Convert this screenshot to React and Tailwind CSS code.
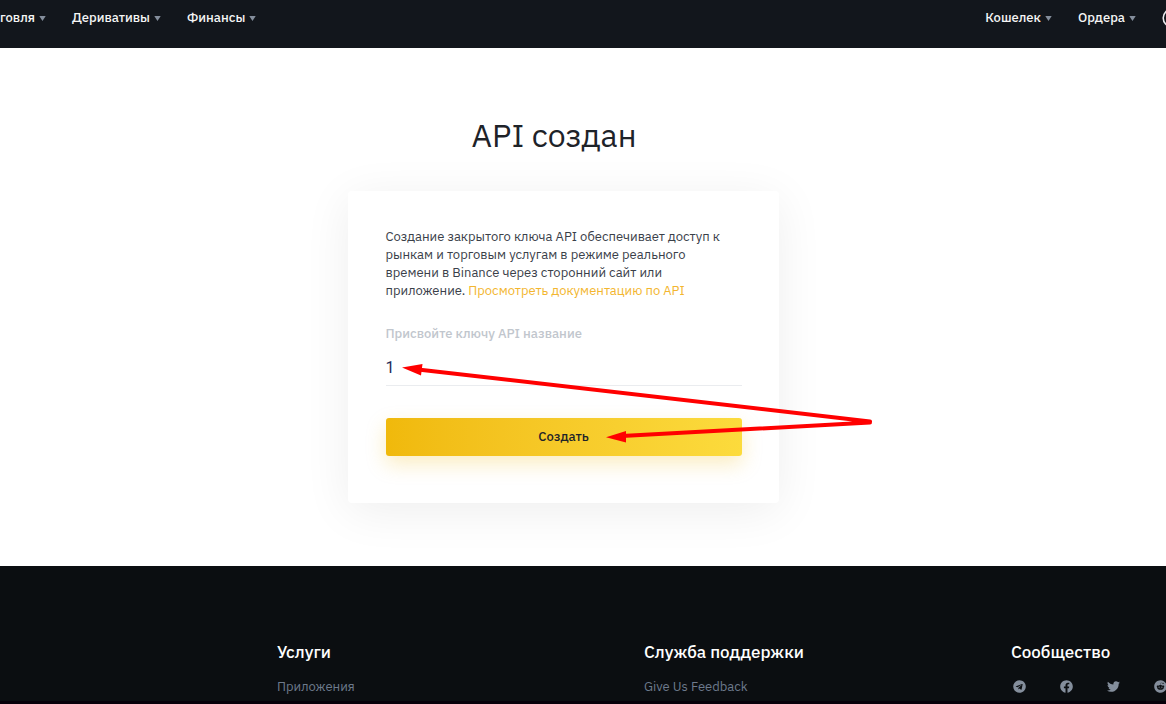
import React from "react";
import { FaTelegram, FaFacebook, FaTwitter, FaReddit } from "react-icons/fa";

function NavItem({ label }) {
  return (
    <button type="button" className="flex items-center gap-1 text-[13px] leading-6 font-medium text-[#f5f5f5]">
      {label}
      <svg viewBox="0 0 7 5" className="h-[5px] w-[7px] fill-[#848e9c]" aria-hidden="true">
        <path d="M0.3 0h6.4L3.5 5z" />
      </svg>
    </button>
  );
}

function Header() {
  return (
    <header className="flex h-12 items-start justify-between overflow-hidden bg-[#12161c] pt-1.5">
      <nav className="flex gap-[26px]">
        <NavItem label="говля" />
        <NavItem label="Деривативы" />
        <NavItem label="Финансы" />
      </nav>
      <div className="-mr-4 flex gap-[26px]">
        <NavItem label="Кошелек" />
        <NavItem label="Ордера" />
        <button type="button" aria-label="Профиль" className="flex h-6 items-center">
          <svg viewBox="0 0 20 20" className="h-5 w-5 fill-none stroke-[#eaecef] stroke-[1.6]" aria-hidden="true">
            <circle cx="10" cy="10" r="8.8" />
            <circle cx="10" cy="8" r="3" />
            <path d="M4.5 16c2-3.500 9-3.500 11 0" />
          </svg>
        </button>
      </div>
    </header>
  );
}

function Arrows() {
  return (
    <svg
      viewBox="0 0 530 260"
      className="pointer-events-none absolute top-0 left-0 h-[260px] w-[530px] fill-[#ff0000] stroke-[#ff0000]"
      aria-hidden="true"
    >
      <path d="M70 178.500L522 230.500M274 245L522 231.500" fill="none" strokeWidth="4" strokeLinecap="round" />
      <path d="M54 176.500L74.500 173L73 184.500zM258 246.300L278 240L278 251.500z" stroke="none" />
    </svg>
  );
}

function Footer() {
  const icons = [
    ["Telegram", FaTelegram],
    ["Facebook", FaFacebook],
    ["Twitter", FaTwitter],
    ["Reddit", FaReddit],
  ];
  return (
    <footer className="flex-1 overflow-hidden border-b-[3px] border-[#07000a] bg-[#0b0e11] pt-[72px] pl-[277px]">
      <div className="flex">
        <section className="w-[367px] shrink-0">
          <h2 className="text-[17px] leading-7 font-medium text-white">Услуги</h2>
          <a href="#apps" className="mt-[11px] block text-[13px] leading-5 text-[#6d7a8c]">Приложения</a>
        </section>
        <section className="w-[367px] shrink-0">
          <h2 className="text-[17px] leading-7 font-medium text-white">Служба поддержки</h2>
          <a href="#feedback" className="mt-[11px] block text-[13px] leading-5 text-[#6d7a8c]">Give Us Feedback</a>
        </section>
        <section className="w-[200px] shrink-0">
          <h2 className="text-[17px] leading-7 font-medium text-white">Сообщество</h2>
          <div className="mt-2.5 flex h-5 items-center gap-[34px] pl-0.5">
            {icons.map(([name, Icon]) => (
              <a key={name} href={"#" + name} aria-label={name} className="text-[#848e9c]">
                <Icon className="h-[13px] w-[13px]" />
              </a>
            ))}
          </div>
        </section>
      </div>
    </footer>
  );
}

export default function App() {
  return (
    <div className="flex min-h-screen flex-col overflow-hidden bg-white font-['IBM_Plex_Sans',Roboto,sans-serif]">
      <Header />
      <main className="flex flex-col items-center pt-[63px] pr-10 pb-[63px]">
        <h1 className="pr-[18px] text-[32px] leading-12 font-normal text-[#1e2329]">API создан</h1>
        <form
          className="relative mt-8 h-[312px] w-[431px] rounded-[4px] bg-white pr-[37px] pl-[38px] pt-[37px] shadow-[0_8px_48px_rgba(0,0,0,0.07)]"
          onSubmit={(e) => e.preventDefault()}
        >
          <p className="text-[13px] leading-[18px] text-[#3a4049]">
            Создание закрытого ключа API обеспечивает доступ к<br />
            рынкам и торговым услугам в режиме реального<br />
            времени в Binance через сторонний сайт или<br />
            приложение. <a href="#docs" className="text-[#f3b62f]">Просмотреть документацию по API</a>
          </p>
          <label htmlFor="key-name" className="mt-6 block text-[13px] leading-5 font-medium text-[#c1c6cd]">
            Присвойте ключу API название
          </label>
          <input
            id="key-name"
            type="text"
            defaultValue="1"
            className="mt-2 block h-[34px] w-full border-b border-[#eaecef] pb-0.5 font-[Roboto,sans-serif] text-base text-[#1e2a5a] outline-none"
          />
          <button
            type="submit"
            className="mt-8 block h-[38px] w-full rounded-[3px] bg-linear-to-r from-[#f0b90b] to-[#fcdb3c] text-[13px] font-medium text-[#1e2329] shadow-[0_8px_20px_rgba(240,185,11,0.25)]"
          >
            Создать
          </button>
          <Arrows />
        </form>
      </main>
      <Footer />
    </div>
  );
}
